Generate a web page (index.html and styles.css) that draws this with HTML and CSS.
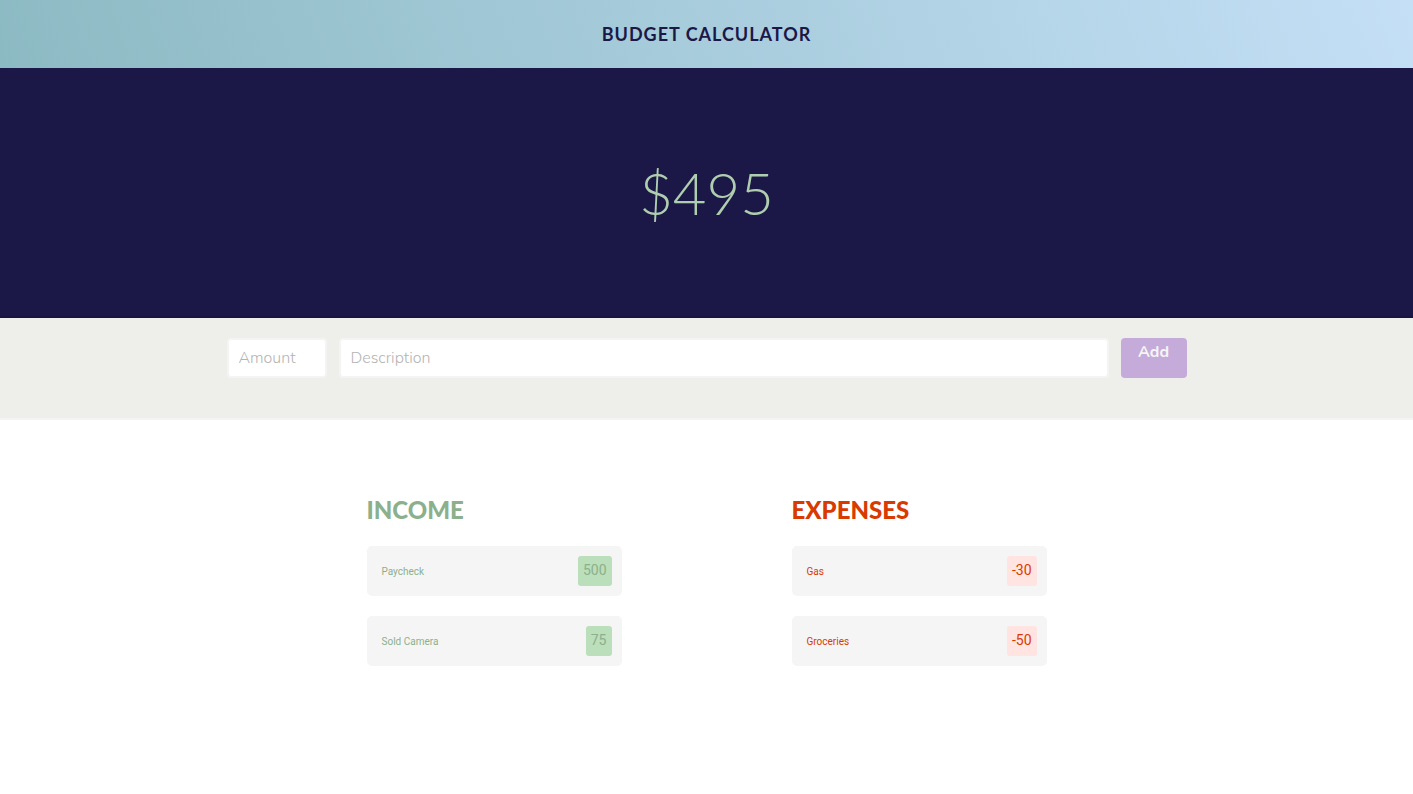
FILE: index.html
```html
<!DOCTYPE html>
<html lang="en">
<head>
<meta charset="utf-8">
<meta name="viewport" content="width=device-width, initial-scale=1">
<title>Budget Calculator</title>
<link rel="stylesheet" href="styles.css">
</head>
<body>
<header class="header"><h1 class="title">Budget Calculator</h1></header>
<section class="balance"><p class="total">$495</p></section>
<div class="entry-bar">
  <form class="entry">
    <input class="field field-amount" type="text" placeholder="Amount" aria-label="Amount">
    <input class="field field-description" type="text" placeholder="Description" aria-label="Description">
    <button class="add" type="button">Add</button>
  </form>
</div>
<main class="lists">
  <section class="list income">
    <h2 class="heading">Income</h2>
    <ul class="items">
      <li class="item"><span>Paycheck</span><span class="value">500</span></li>
      <li class="item"><span>Sold Camera</span><span class="value">75</span></li>
    </ul>
  </section>
  <section class="list expenses">
    <h2 class="heading">Expenses</h2>
    <ul class="items">
      <li class="item"><span>Gas</span><span class="value">-30</span></li>
      <li class="item"><span>Groceries</span><span class="value">-50</span></li>
    </ul>
  </section>
</main>
</body>
</html>
```
FILE: styles.css
```css
* { box-sizing: border-box; }
body { margin: 0; background: #fff; font-family: Roboto, sans-serif; }
.header { padding: 22px 20px; background: linear-gradient(70deg, #8cbac3, #c4dff6); text-align: center; }
.title { margin: 0; color: #1b1847; font: 700 18px/24px Lato, sans-serif; letter-spacing: 1px; text-transform: uppercase; }
.balance { padding: 90px 20px 88px; border-bottom: 2px solid #19143f; background: #1b1847; text-align: center; }
.total { margin: 0; color: #afcdaf; font: 300 58px/70px Lato, sans-serif; }
.entry-bar { padding: 20px 20px 40px; border-bottom: 2px solid #f4f4f4; background: #eeefea; }
.entry { display: flex; gap: 12px; max-width: 960px; margin: 0 auto; }
.field { min-width: 0; height: 40px; padding: 0 10px; border: 2px solid #f4f4f4; border-radius: 4px; background: #fff; color: #555; font: 300 16px/20px Nunito, Lato, sans-serif; }
.field::placeholder { color: #b4b4b4; opacity: 1; }
.field-amount { width: 100px; }
.field-description { flex: 1; }
.add { width: 66px; height: 40px; padding: 0 0 12px; border: 0; border-radius: 4px; background: #c5abd9; color: #f5f5f5; font: 700 16px/20px Nunito, "Open Sans", sans-serif; }
.lists { display: flex; flex-wrap: wrap; justify-content: center; gap: 40px 170px; padding: 75px 20px 40px; }
.list { width: 255px; }
.heading { margin: 0 0 21px; font: 900 24px/30px Lato, sans-serif; text-transform: uppercase; }
.items { display: grid; gap: 20px; margin: 0; padding: 0; list-style: none; }
.item { display: flex; align-items: center; justify-content: space-between; padding: 10px 10px 10px 15px; border-radius: 5px; background: #f5f5f5; font-size: 10px; }
.value { padding: 0 5px 2px; border-radius: 3px; font-size: 14px; line-height: 28px; }
.income { color: #8cb08c; }
.income .value { background: #bbdfba; }
.expenses { color: #d93a00; }
.expenses .value { background: #ffe4e1; }
```
